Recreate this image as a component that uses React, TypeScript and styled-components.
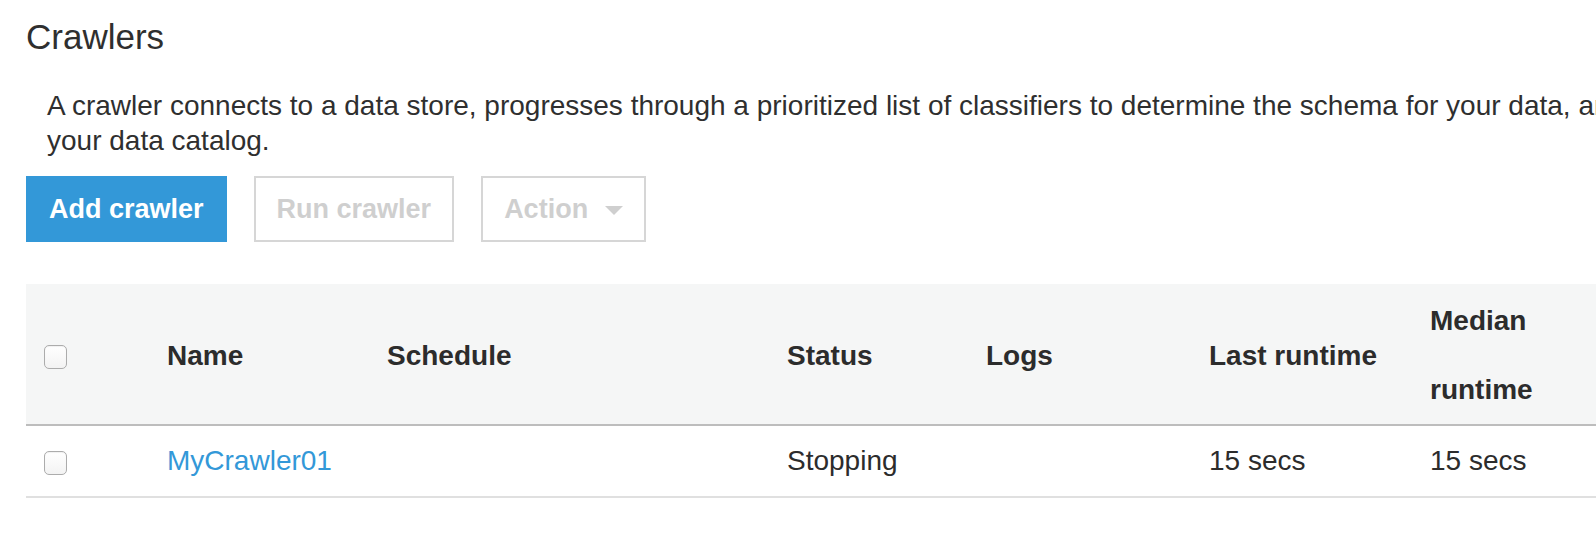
import React from 'react';
import styled, { createGlobalStyle } from 'styled-components';

const GlobalStyle = createGlobalStyle`
  html, body {
    margin: 0;
    padding: 0;
    background: #ffffff;
    overflow: hidden;
  }
  body {
    font-family: "Liberation Sans", Arial, Helvetica, sans-serif;
    color: #333333;
  }
`;

interface Crawler {
  name: string;
  schedule: string;
  status: string;
  logs: string;
  lastRuntime: string;
  medianRuntime: string;
  tablesUpdated: string;
  tablesAdded: string;
}

const crawlers: Crawler[] = [
  {
    name: 'MyCrawler01',
    schedule: '',
    status: 'Stopping',
    logs: '',
    lastRuntime: '15 secs',
    medianRuntime: '15 secs',
    tablesUpdated: '0',
    tablesAdded: '0',
  },
];

const columns = [
  { key: 'select', label: '', width: 123 },
  { key: 'name', label: 'Name', width: 220 },
  { key: 'schedule', label: 'Schedule', width: 400 },
  { key: 'status', label: 'Status', width: 199 },
  { key: 'logs', label: 'Logs', width: 223 },
  { key: 'lastRuntime', label: 'Last runtime', width: 221 },
  { key: 'medianRuntime', label: 'Median runtime', width: 220 },
  { key: 'tablesUpdated', label: 'Tables updated', width: 240 },
  { key: 'tablesAdded', label: 'Tables added', width: 240 },
];

const App: React.FC = () => {
  return (
    <>
      <GlobalStyle />
      <Page>
        <Title>Crawlers</Title>
        <Description>
          A crawler connects to a data store, progresses through a prioritized list of classifiers to
          determine the schema for your data, and then creates metadata tables in
          <br />
          your data catalog.
        </Description>
        <Toolbar>
          <Button $primary>Add crawler</Button>
          <Button disabled>Run crawler</Button>
          <Button disabled>
            Action
            <Caret />
          </Button>
        </Toolbar>
        <Table>
          <thead>
            <tr>
              {columns.map((col) => (
                <HeadCell key={col.key} $width={col.width}>
                  {col.key === 'select' ? <Checkbox /> : col.label}
                </HeadCell>
              ))}
            </tr>
          </thead>
          <tbody>
            {crawlers.map((c) => (
              <tr key={c.name}>
                <Cell>
                  <Checkbox />
                </Cell>
                <Cell>
                  <NameLink href="#">{c.name}</NameLink>
                </Cell>
                <Cell>{c.schedule}</Cell>
                <Cell>{c.status}</Cell>
                <Cell>{c.logs}</Cell>
                <Cell>{c.lastRuntime}</Cell>
                <Cell>{c.medianRuntime}</Cell>
                <Cell>{c.tablesUpdated}</Cell>
                <Cell>{c.tablesAdded}</Cell>
              </tr>
            ))}
          </tbody>
        </Table>
      </Page>
    </>
  );
};

const Page = styled.div`
  width: 2200px;
  padding: 17px 0 0 26px;
`;

const Title = styled.h1`
  margin: 0;
  font-size: 35px;
  line-height: 40px;
  font-weight: 400;
  color: #2f2f2f;
`;

const Description = styled.p`
  margin: 31px 0 0 21px;
  font-size: 28px;
  line-height: 35px;
  white-space: nowrap;
  color: #2f2f2f;
`;

const Toolbar = styled.div`
  display: flex;
  gap: 27px;
  margin-top: 18px;
`;

const Button = styled.button<{ $primary?: boolean }>`
  display: inline-flex;
  align-items: center;
  gap: 17px;
  box-sizing: border-box;
  height: 66px;
  padding: 0 21px;
  font-family: inherit;
  font-size: 27px;
  font-weight: 700;
  border: 2px solid ${(p) => (p.$primary ? '#3398d8' : '#d6d6d6')};
  background: ${(p) => (p.$primary ? '#3398d8' : '#ffffff')};
  color: ${(p) => (p.$primary ? '#ffffff' : '#cfcfcf')};
  border-radius: 0;
  cursor: pointer;

  &:disabled {
    cursor: default;
  }
`;

const Caret = styled.span`
  display: inline-block;
  width: 0;
  height: 0;
  border-left: 9px solid transparent;
  border-right: 9px solid transparent;
  border-top: 9px solid #cfcfcf;
  margin-top: 2px;
`;

const Table = styled.table`
  margin-top: 42px;
  border-collapse: separate;
  border-spacing: 0;
  table-layout: fixed;
  width: 2086px;
`;

const HeadCell = styled.th<{ $width: number }>`
  width: ${(p) => p.$width}px;
  box-sizing: border-box;
  padding: 2px 18px 0;
  text-align: left;
  vertical-align: middle;
  font-size: 28px;
  line-height: 69px;
  font-weight: 700;
  color: #2c2c2c;
  background: #f5f6f6;
  border-bottom: 2px solid #bdbdbd;
`;

const Cell = styled.td`
  padding: 0 18px;
  vertical-align: middle;
  font-size: 28px;
  line-height: 70px;
  color: #2c2c2c;
  white-space: nowrap;
  border-bottom: 2px solid #e0e0e0;
`;

const NameLink = styled.a`
  color: #3398d8;
  text-decoration: none;
`;

const Checkbox = styled.span`
  display: inline-block;
  box-sizing: border-box;
  width: 23px;
  height: 24px;
  vertical-align: middle;
  border: 1px solid #acacac;
  border-radius: 5px;
  background: linear-gradient(#ffffff, #f3f3f3);
  box-shadow: inset 0 1px 1px rgba(0, 0, 0, 0.06);
`;

export default App;
